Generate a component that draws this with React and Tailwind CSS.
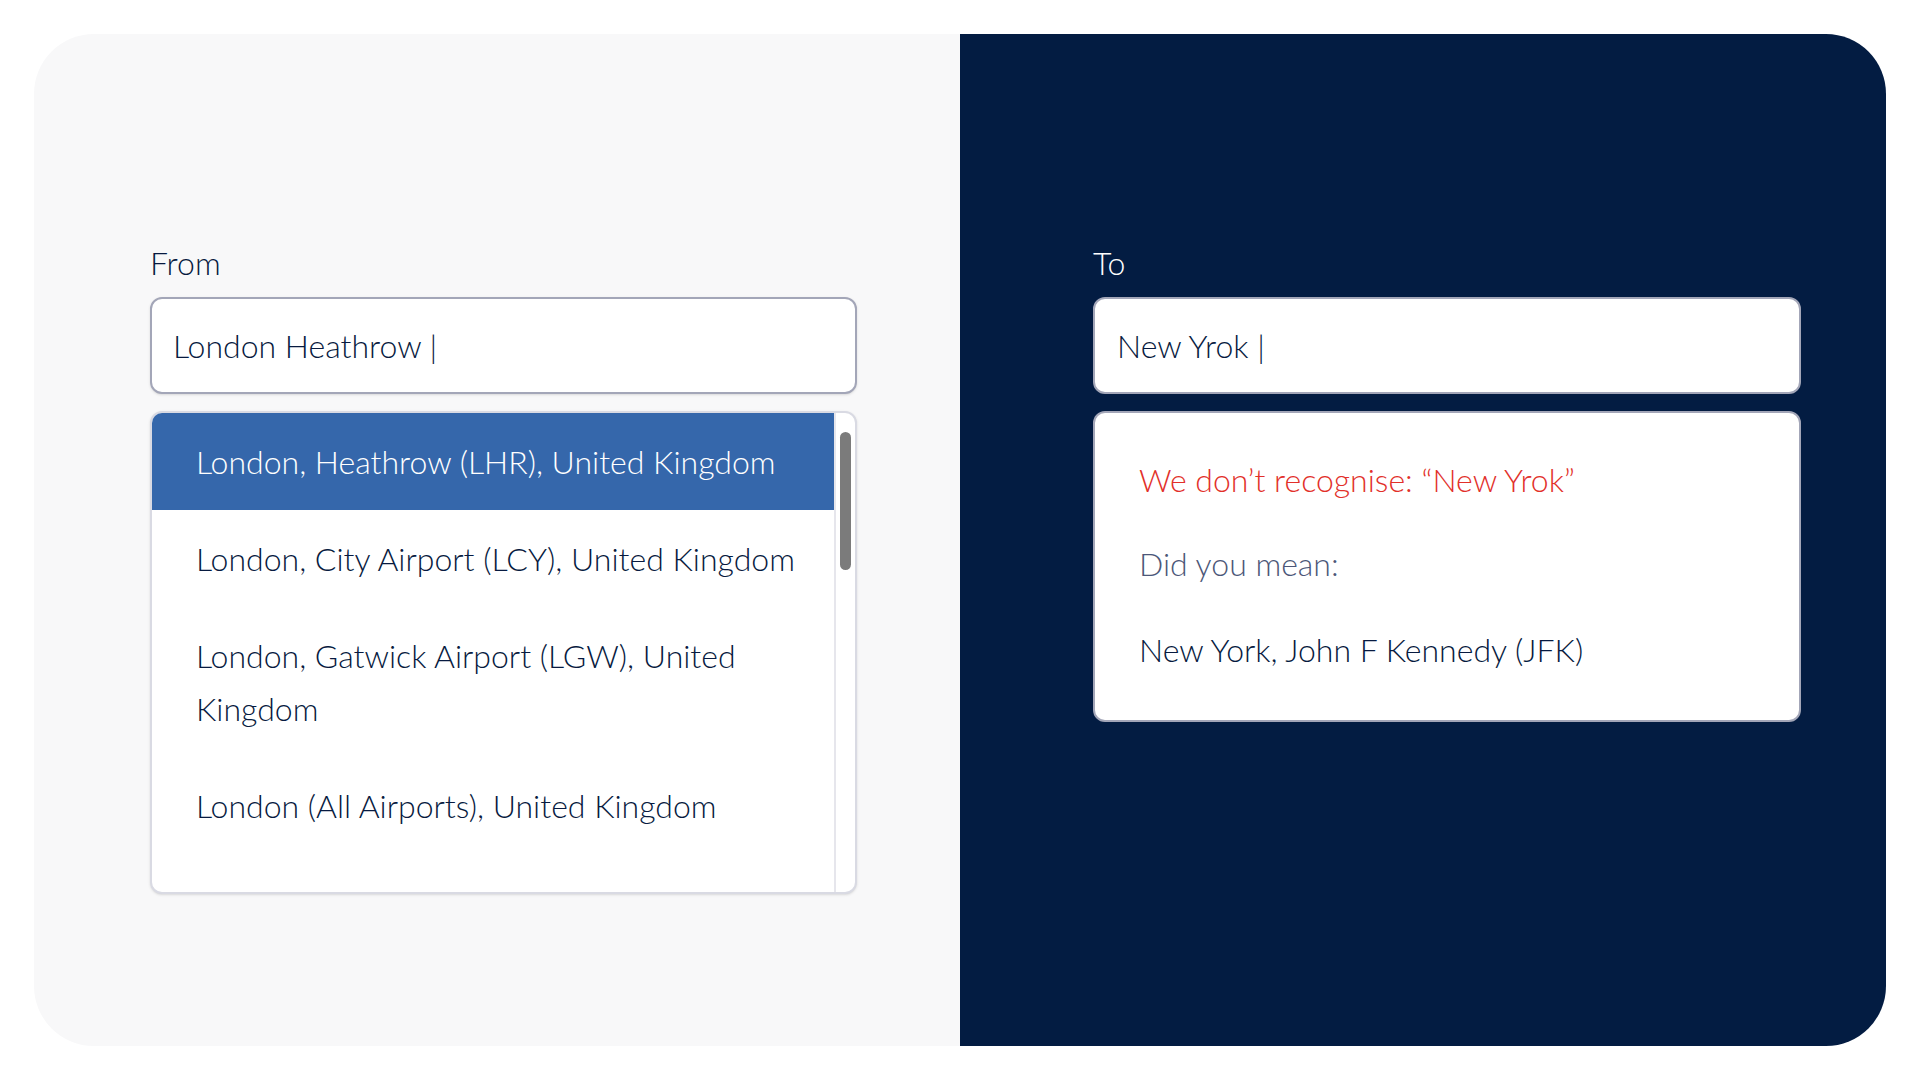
const airports = [
  { label: 'London, Heathrow (LHR), United Kingdom', active: true },
  { label: 'London, City Airport (LCY), United Kingdom' },
  { label: 'London, Gatwick Airport (LGW), United Kingdom' },
  { label: 'London (All Airports), United Kingdom' },
];

export default function App() {
  return (
    <div className="w-[1920px] h-[1080px] bg-white p-[34px] font-['Lato','Open_Sans',sans-serif] font-light text-[#071a40]">
      <div className="flex h-full rounded-[60px] overflow-hidden">
        {/* From */}
        <div className="w-1/2 bg-[#f8f8f9] pl-[116px] pr-[103px] pt-[209px]">
          <label className="block text-[32px] leading-[40px] mb-[14px]">From</label>
          <div className="h-[97px] rounded-[12px] border-2 border-[#a3a6b8] bg-white flex items-center px-[21px] text-[32px] shadow-sm">
            London Heathrow |
          </div>
          <div className="mt-[17px] h-[483px] rounded-[12px] border-2 border-[#d9dae3] bg-white overflow-hidden flex shadow-sm">
            <ul className="flex-1">
              {airports.map((a) => (
                <li
                  key={a.label}
                  className={`pl-[44px] pr-[24px] py-[22px] text-[32px] leading-[53px] ${a.active ? 'bg-[#3567ab] text-white' : ''}`}
                >
                  {a.label}
                </li>
              ))}
            </ul>
            <div className="w-[21px] border-l-2 border-[#e6e6ec] flex justify-center pt-[19px]">
              <div className="w-[11px] h-[138px] rounded-full bg-[#7b7b7b]" />
            </div>
          </div>
        </div>

        {/* To */}
        <div className="w-1/2 bg-[#031c42] pl-[133px] pr-[85px] pt-[209px]">
          <label className="block text-[32px] leading-[40px] mb-[14px] text-white">To</label>
          <div className="h-[97px] rounded-[12px] border-2 border-[#a3a6b8] bg-white flex items-center px-[22px] text-[32px]">
            New Yrok |
          </div>
          <div className="mt-[17px] h-[311px] rounded-[12px] border-2 border-[#a3a6b8] bg-white px-[44px] pt-[40px] text-[32px]">
            <p className="text-[#e2302a] leading-[53px]">We don’t recognise: “New Yrok”</p>
            <p className="text-[#4c5778] leading-[53px] mt-[31px]">Did you mean:</p>
            <p className="leading-[53px] mt-[33px]">New York, John F Kennedy (JFK)</p>
          </div>
        </div>
      </div>
    </div>
  );
}
